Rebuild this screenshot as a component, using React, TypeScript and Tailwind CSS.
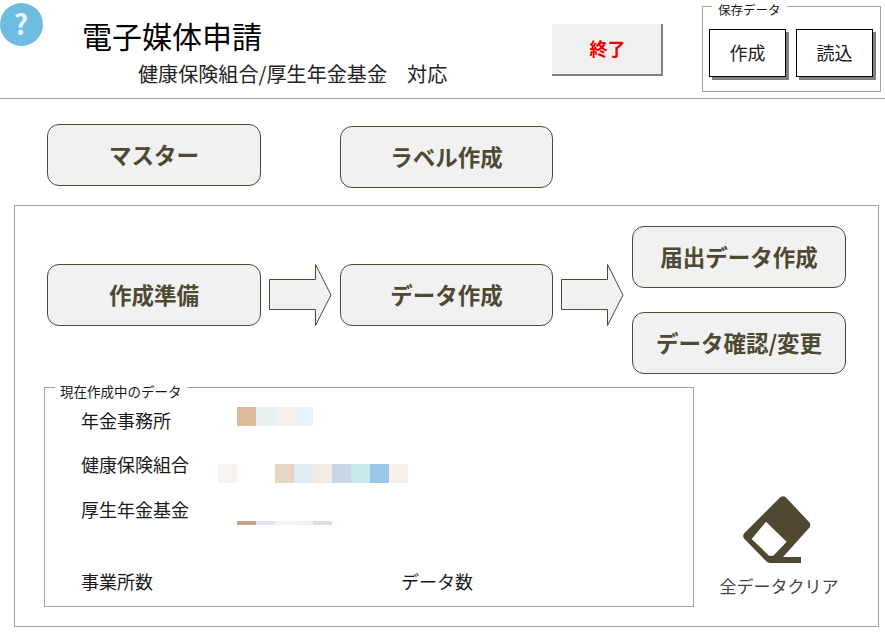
const font = { fontFamily: '"Noto Sans CJK JP", "Noto Sans", sans-serif' };

const pixelRows = {
  office: ["#dcb998", "#e6f1f0", "#f5f0ea", "#e9f3fa"],
  union: ["#f7f4ef", "#ffffff", "#ffffff", "#e6d6c2", "#dfedf1", "#f1ece4", "#c9d7e4", "#c8e8ee", "#9cc6e8", "#f6f0ea"],
  fund: ["#c9a488", "#dbe7f3", "#f6f4f1", "#edf2f6", "#d5e0ea"],
};

function FlowButton({ label, className = "" }: { label: string; className?: string }) {
  return (
    <button
      className={`flex h-[62px] shrink-0 items-center justify-center rounded-[12px] border border-[#4f4933] bg-[#f1f1f1] pb-[1px] text-[22.5px] font-bold text-[#4f4933] ${className}`}
    >
      {label}
    </button>
  );
}

function Arrow({ className = "" }: { className?: string }) {
  return (
    <svg className={`shrink-0 ${className}`} width="64" height="64" viewBox="0 0 64 64">
      <path d="M0.5 16.5H46.5V1.5L62 32L46.5 62.5V46.5H0.5Z" fill="#f1f1f1" stroke="#4f4933" strokeWidth="1" />
    </svg>
  );
}

function Eraser() {
  return (
    <svg className="mr-[4px]" width="68" height="68" viewBox="0 0 68 68">
      <path
        fillRule="evenodd"
        fill="#4f4730"
        d="M37.5 1Q40 -0.500 42.500 1L66.500 26.500Q68 29 66.500 31.500L40 61H58V67H27Q25 67 23 65L1 42.500Q-0.500 40 1 37.500ZM23 25.700L8.700 43L26 59.700H30.300L43.700 45.700Z"
      />
    </svg>
  );
}

function Pixels({ colors, height }: { colors: string[]; height: string }) {
  return (
    <div className={`flex ${height}`}>
      {colors.map((c, i) => (
        <span key={i} className="block h-full w-[19px]" style={{ backgroundColor: c }} />
      ))}
    </div>
  );
}

export default function App() {
  return (
    <div className="h-[633px] w-[885px] overflow-hidden bg-white text-[#1a1a1a]" style={font}>
      <header className="flex h-[99px] border-b border-[#a3a3a3]">
        <div className="mt-[3px] flex h-[43px] w-[43px] shrink-0 items-center justify-center rounded-full bg-[#6ebde0] pb-[3px] pr-[1px] text-[28px] font-bold leading-none text-white/85">
          ?
        </div>
        <div className="ml-[39px] w-[470px] shrink-0">
          <h1 className="mt-[13px] text-[30px] font-normal leading-[44px] text-black">電子媒体申請</h1>
          <p className="ml-[56px] mt-[2px] whitespace-nowrap text-[20.1px] leading-[30px] text-[#222]">
            健康保険組合/厚生年金基金　対応
          </p>
        </div>
        <button className="mt-[24px] flex h-[52px] w-[111px] shrink-0 items-center justify-center bg-[#f0f0f0] pb-[4px] text-[18px] font-bold text-[#ee0000] shadow-[inset_-2px_-2px_0_#808080]">
          終了
        </button>
        <fieldset className="ml-[39px] h-[92px] w-[179px] shrink-0 border border-[#a3a3a3] px-[6px]">
          <legend className="ml-[3px] h-[13px] px-[6px] text-[12.5px] leading-[20px]">保存データ</legend>
          <div className="mt-[16px] flex gap-[10px]">
            <button className="flex h-[48px] w-[77px] items-center justify-center border border-black bg-white pb-[1px] text-[18px] shadow-[3px_3px_0_#808080]">
              作成
            </button>
            <button className="flex h-[48px] w-[77px] items-center justify-center border border-black bg-white pb-[1px] text-[18px] shadow-[3px_3px_0_#808080]">
              読込
            </button>
          </div>
        </fieldset>
      </header>

      <div className="flex items-start pl-[47px]">
        <FlowButton label="マスター" className="mt-[25px] w-[214px]" />
        <FlowButton label="ラベル作成" className="ml-[79px] mt-[27px] w-[213px]" />
      </div>

      <section className="ml-[14px] mt-[17px] h-[422px] w-[865px] border border-[#a3a3a3] pl-[32px] pt-[20px]">
        <div className="flex items-start">
          <FlowButton label="作成準備" className="mt-[38px] w-[214px]" />
          <Arrow className="ml-[8px] mt-[37px]" />
          <FlowButton label="データ作成" className="ml-[7px] mt-[38px] w-[213px]" />
          <Arrow className="ml-[8px] mt-[37px]" />
          <div className="ml-[7px] flex flex-col gap-[24px]">
            <FlowButton label="届出データ作成" className="w-[214px]" />
            <FlowButton label="データ確認/変更" className="w-[214px]" />
          </div>
        </div>

        <div className="mt-[7px] flex">
          <fieldset className="-ml-[3px] h-[226px] w-[650px] shrink-0 border border-[#a3a3a3]">
            <legend className="ml-[10px] h-[13px] px-[5px] text-[13.5px] leading-[20px]">現在作成中のデータ</legend>
            <div className="pl-[36px]">
              <div className="grid grid-cols-[137px_1fr] text-[18px] leading-[26px]">
                <span className="mt-[13px]">年金事務所</span>
                <div className="ml-[19px] mt-[13px]">
                  <Pixels colors={pixelRows.office} height="h-[19px]" />
                </div>
                <span className="mt-[18px]">健康保険組合</span>
                <div className="mt-[31px]">
                  <Pixels colors={pixelRows.union} height="h-[19px]" />
                </div>
                <span className="mt-[13px]">厚生年金基金</span>
                <div className="ml-[19px] mt-[38px]">
                  <Pixels colors={pixelRows.fund} height="h-[4px]" />
                </div>
              </div>
              <div className="mt-[43px] flex text-[18px] leading-[26px]">
                <span className="w-[320px]">事業所数</span>
                <span>データ数</span>
              </div>
            </div>
          </fieldset>
          <div className="ml-[26px] mt-[115px] flex w-[118px] flex-col items-center">
            <Eraser />
            <span className="mt-[9px] whitespace-nowrap text-[17px] leading-[26px] text-[#444]">全データクリア</span>
          </div>
        </div>
      </section>
    </div>
  );
}
